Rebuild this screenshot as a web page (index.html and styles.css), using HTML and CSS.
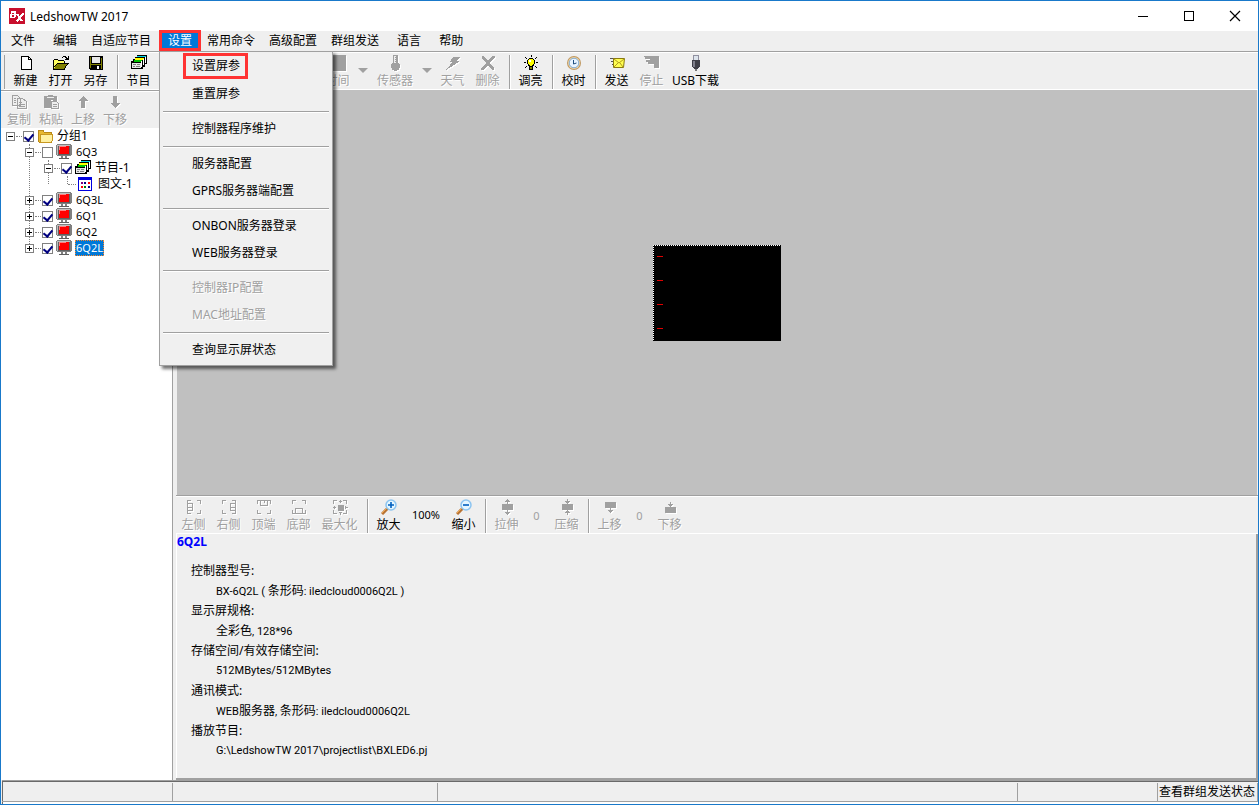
FILE: index.html
```html
<!DOCTYPE html>
<html lang="zh-CN">
<head>
<meta charset="utf-8">
<title>LedshowTW 2017</title>
<link rel="stylesheet" href="styles.css">
</head>
<body>
<svg class="defs" aria-hidden="true">
  <symbol id="i-monitor" viewBox="0 0 16 16">
    <path d="M1 0h14v1h1v10h-1v1H1v-1H0V1h1z" fill="#808080"/>
    <path d="M1 1h13v10H1z" fill="#c0c0c0"/>
    <path d="M2 2h12v9H2z" fill="#606060"/>
    <path d="M3 2h10v8H3z" fill="#ff0000"/>
    <path d="M3 2h7v1H4v3H3z" fill="#ff8080"/>
    <path d="M5 12h2v2H5zM9 12h2v2H9z" fill="#808080"/>
    <path d="M3 14h10v1H3z" fill="#606060"/>
  </symbol>
  <symbol id="i-program" viewBox="0 0 16 16">
    <path d="M6 0h10v9h-2v3h-2v2H0V6h2V4h2V2h2z" fill="#000"/>
    <path d="M6 1h9v1H6z" fill="#00d8e8"/><path d="M15 2h-1v6h1z" fill="#fff"/>
    <path d="M4 3h9v2H4z" fill="#ffff00"/><path d="M12 4h1v6h-1z" fill="#fff"/>
    <path d="M3 5h8v2H3z" fill="#00c000"/><path d="M10 6h1v6h-1z" fill="#fff"/>
    <path d="M1 8h9v5H1z" fill="#e8e8e8"/>
    <path d="M2 9h3v1H2zM6 9h3v1H6zM2 11h2v1H2zM5 11h4v1H5z" fill="#808080"/>
  </symbol>
  <symbol id="i-up" viewBox="0 0 16 16"><path d="M8 2l5 5h-3v7H6V7H3z"/></symbol>
  <symbol id="i-down" viewBox="0 0 16 16"><path d="M8 14l5-5h-3V2H6v7H3z"/></symbol>
  <symbol id="i-lens" viewBox="0 0 16 16">
    <path d="M1 15l6-6" stroke="#b87333" stroke-width="3"/>
    <path d="M1 14l5-5" stroke="#f0a850" stroke-width="1"/>
    <circle cx="10" cy="6" r="5" fill="#e4f6ff" stroke="#8cc4f0" stroke-width="1.5"/>
  </symbol>
</svg>
<div class="window">
  <header class="titlebar">
    <svg class="logo" viewBox="0 0 16 16" aria-hidden="true">
      <rect width="16" height="16" rx="1" fill="#c8102e"/>
      <path d="M2 3h4.500l1 1-.5 2 .5 1.500L6 10H1zM3.500 4.500L3.300 6h2l.3-1.500zM3 7.300L2.800 8.600h2.400l.3-1.300z" fill="#fff" fill-rule="evenodd"/>
      <path d="M8 6l5 7M14.500 5L8 13.500" stroke="#fff" stroke-width="2"/>
    </svg>
    <h1>LedshowTW 2017</h1>
    <div class="winbtns">
      <button aria-label="最小化"><svg viewBox="0 0 12 12"><path d="M1 6.500h10" stroke="#000"/></svg></button>
      <button aria-label="最大化"><svg viewBox="0 0 12 12"><path d="M1.500 1.500h9v9h-9z" stroke="#000" fill="none"/></svg></button>
      <button aria-label="关闭"><svg class="smooth" viewBox="0 0 12 12"><path d="M1 1l10 10M11 1L1 11" stroke="#000" stroke-width="1.200"/></svg></button>
    </div>
  </header>

  <nav class="menubar">
    <button>文件</button><button>编辑</button><button class="long">自适应节目</button>
    <div class="open">
      <button class="active">设置</button>
      <div class="dropdown">
        <button class="marked"><span>设置屏参</span></button>
        <button>重置屏参</button>
        <hr>
        <button>控制器程序维护</button>
        <hr>
        <button>服务器配置</button>
        <button>GPRS服务器端配置</button>
        <hr>
        <button>ONBON服务器登录</button>
        <button>WEB服务器登录</button>
        <hr>
        <button disabled>控制器IP配置</button>
        <button disabled>MAC地址配置</button>
        <hr>
        <button>查询显示屏状态</button>
      </div>
    </div>
    <button class="long">常用命令</button><button class="long">高级配置</button><button class="long">群组发送</button><button>语言</button><button>帮助</button>
  </nav>

  <div class="toolbar main">
    <button><svg viewBox="0 0 16 16"><path d="M3.500 1.500h7l3 3v10h-10z" fill="#fff" stroke="#000"/><path d="M10.500 1.500v3h3" fill="none" stroke="#000"/></svg>新建</button>
    <button><svg viewBox="0 0 16 16"><path d="M1 5h4v1h6v3H4l-3 5z" fill="#ffff60"/><path d="M1 4h4v1H1zM5 5h6v1H5zM0 5h1v9H0zM11 6h1v2h-1z" fill="#000"/><path d="M4 8h11l-4 6H1z" fill="#808000"/><path d="M4 8h12v1h-1l-3 5v1H0v-1h11l3-5H4l-3 4v-1z" fill="#000"/><path d="M9 2h1V1h3v1h1v1h1V1h1v4h-4V4h1V3h-1V2h-2v1H9z" fill="#000"/></svg>打开</button>
    <button><svg viewBox="0 0 16 16"><path d="M1 1h14v14H2l-1-1z" fill="#000"/><path d="M2 2h1v11H2zM13 3h1v11h-1z" fill="#808000"/><path d="M4 2h8v6H4z" fill="#e8e8e8"/><path d="M3 9h10v1H3z" fill="#808000"/><path d="M9 11h2v3H9z" fill="#fff"/></svg>另存</button>
    <i class="sep"></i>
    <button><svg><use href="#i-program"/></svg>节目</button>
    <div class="group">
      <button disabled><svg viewBox="0 0 16 16"><path d="M0 0h16v16H0z"/></svg>时间</button>
      <button class="caret" disabled aria-label="展开时间"></button>
      <button class="w3" disabled><svg viewBox="0 0 16 16"><path d="M6 0h5v8h1v1h1v4h-1v2h-2v1H7v-1H5v-2H4V9h1V8h1z"/><path d="M7 1h2v7H7z" fill="#eee"/><path d="M8 2h2v1H8zM8 4h2v1H8zM8 6h2v1H8z"/></svg>传感器</button>
      <button class="caret" disabled aria-label="展开传感器"></button>
      <button disabled><svg viewBox="0 0 16 16"><path d="M8 2h7l-3 4h3L6 12l-5 3 4-5H4l3-3H5z"/></svg>天气</button>
      <button disabled><svg viewBox="0 0 16 16"><path d="M2 1h2l4 5 4-5h3v1l-5 6 4 5v2h-2l-4-5-4 5H1v-1l5-6-4-5z"/></svg>删除</button>
      <i class="sep"></i>
      <button><svg viewBox="0 0 16 16"><path d="M2 2l2 2M8 0v2M14 2l-2 2M1 7.500h2M15 7.500h-2M2 13l2-2M14 13l-2-2" stroke="#000"/><path d="M6 3h4v1h1v1h1v4h-1v2h-1v4H6v-4H5V9H4V5h1V4h1z" fill="#000"/><path d="M6 4h4v1h1v4h-1v1H9v1H7v-1H6V9H5V5h1z" fill="#ffff00"/><path d="M6 5h2v2H6z" fill="#fff"/><path d="M7 12h2v2H7z" fill="#808000"/></svg>调亮</button>
      <i class="sep"></i>
      <button><svg class="smooth" viewBox="0 0 16 16"><circle cx="8" cy="8" r="7" fill="#c09860"/><circle cx="8" cy="8" r="6" fill="#f0d8a8"/><circle cx="8" cy="8" r="4.800" fill="#e8f4ff" stroke="#80a8d0"/><path d="M7.500 5v4l3-1" stroke="#205080" fill="none"/></svg>校时</button>
      <i class="sep"></i>
      <button><svg class="smooth" viewBox="0 0 16 16"><path d="M1 3.500h4M2 6.500h2M3 9.500h1" stroke="#555"/><path d="M4.500 3.500h11l-1 9h-10z" fill="#ffff50" stroke="#8a7a10"/><path d="M5 4l5 4 5-4M5 12l4-4M14 12l-3-4" fill="none" stroke="#b09a20"/></svg>发送</button>
      <button disabled><svg viewBox="0 0 16 16"><path d="M0 1h15v12h-5V9H4V7H2V5h4V4H1V2H0z"/></svg>停止</button>
      <button class="wide"><svg viewBox="0 0 16 16"><path d="M5 0h6v6H5z" fill="#9090a0"/><path d="M6 1h4v4H6z" fill="#dde4ec"/><path d="M4 5h8v7h-1v1h-1v1H6v-1H5v-1H4z" fill="#404048"/><path d="M5 6h2v6H5z" fill="#80808c"/><path d="M7 14h2v2H7z" fill="#777"/></svg>USB下载</button>
    </div>
  </div>

  <main class="body">
    <aside class="left">
      <div class="toolbar edit">
        <button disabled><svg viewBox="0 0 16 16"><path d="M1.500 1.500h5l3 3v7h-8zM6.500 4.500h5l4 3v7h-9z" fill="#eee" stroke="#a0a0a0"/><path d="M3 4h2M3 6h2M3 8h2M8 8h3M8 10h6M8 12h6" stroke="#a0a0a0"/></svg>复制</button>
        <button disabled><svg viewBox="0 0 16 16"><path d="M1 2h4V1h5v1h4v5h-3L8 6v8H1z"/><path d="M4 3h7v1H4z" fill="#eee"/><path d="M8.500 7.500h5l2 2v5h-7z" fill="#eee" stroke="#a0a0a0"/><path d="M10 10h4M10 12h4" stroke="#a0a0a0"/></svg>粘贴</button>
        <button disabled><svg><use href="#i-up"/></svg>上移</button>
        <button disabled><svg><use href="#i-down"/></svg>下移</button>
      </div>
      <ul class="tree">
        <li>
          <div class="row"><button class="exp" aria-label="折叠"></button><i class="dots"></i><label><input type="checkbox" checked><svg viewBox="0 0 16 16"><path d="M1 4l1-2h4l1 2h7v10H2L1 13z" fill="#e8b830" stroke="#b88818"/><path d="M3 6h12v7l-1 1H3z" fill="#fff0a0" stroke="#c89820"/></svg><span>分组1</span></label></div>
          <ul>
            <li>
              <div class="row"><button class="exp" aria-label="折叠"></button><i class="dots"></i><label><input type="checkbox"><svg><use href="#i-monitor"/></svg><span class="lat">6Q3</span></label></div>
              <ul>
                <li>
                  <div class="row"><button class="exp" aria-label="折叠"></button><i class="dots"></i><label><input type="checkbox" checked><svg><use href="#i-program"/></svg><span>节目-1</span></label></div>
                  <ul class="leaf">
                    <li><div class="row"><i class="dots"></i><svg viewBox="0 0 16 16"><path d="M1 1h14v14H1z" fill="#0000e0"/><path d="M2 4h12v10H2z" fill="#fff"/><path d="M4 6h2v2H4z" fill="#800080"/><path d="M7 6h2v2H7z" fill="#000080"/><path d="M11 6h2v2h-2z" fill="#ff0000"/><path d="M4 10h2v2H4z" fill="#ff0000"/><path d="M7 10h2v2H7z" fill="#008000"/><path d="M11 10h2v2h-2z" fill="#000080"/></svg><span>图文-1</span></div></li>
                  </ul>
                </li>
              </ul>
            </li>
            <li><div class="row"><button class="exp plus" aria-label="展开"></button><i class="dots"></i><label><input type="checkbox" checked><svg><use href="#i-monitor"/></svg><span class="lat">6Q3L</span></label></div></li>
            <li><div class="row"><button class="exp plus" aria-label="展开"></button><i class="dots"></i><label><input type="checkbox" checked><svg><use href="#i-monitor"/></svg><span class="lat">6Q1</span></label></div></li>
            <li><div class="row"><button class="exp plus" aria-label="展开"></button><i class="dots"></i><label><input type="checkbox" checked><svg><use href="#i-monitor"/></svg><span class="lat">6Q2</span></label></div></li>
            <li><div class="row"><button class="exp plus" aria-label="展开"></button><i class="dots"></i><label><input type="checkbox" checked><svg><use href="#i-monitor"/></svg><span class="lat sel">6Q2L</span></label></div></li>
          </ul>
        </li>
      </ul>
    </aside>

    <section class="right">
      <div class="canvas">
        <div class="screen"><i></i><i></i><i></i><i></i></div>
      </div>
      <div class="toolbar view">
        <button disabled><svg class="line" viewBox="0 0 16 16"><path d="M1.500 5V1.500H5M1.500 11v3.500H5M11 1.500h3.500V5M14.500 11v3.500H11M1.500 4.500h5v7h-5zM2 8h4"/></svg>左侧</button>
        <button disabled><svg class="line" viewBox="0 0 16 16"><path d="M1.500 5V1.500H5M1.500 11v3.500H5M11 1.500h3.500V5M14.500 11v3.500H11M9.500 4.500h5v7h-5zM10 8h4"/></svg>右侧</button>
        <button disabled><svg class="line" viewBox="0 0 16 16"><path d="M1.500 5V1.500h13V5M1.500 11v3.500H5M14.500 11v3.500H11M4.500 1.500v5h7v-5M8.500 2v2"/></svg>顶端</button>
        <button disabled><svg class="line" viewBox="0 0 16 16"><path d="M1.500 5V1.500H5M11 1.500h3.500V5M1.500 11v3.500h13V11M4.500 14v-5h7v5"/></svg>底部</button>
        <button class="w3" disabled><svg class="line" viewBox="0 0 16 16"><path d="M1.500 5V1.500H5M1.500 11v3.500H5M11 1.500h3.500V5M14.500 11v3.500H11M8.500 1v3M8.500 13v3M1 8.500h3M13 8.500h3M7 2.500h3M7 13.500h3M2.500 7v3M13.500 7v3"/><path d="M6 6h5v5H6z" fill="#a0a0a0"/></svg>最大化</button>
        <i class="sep"></i>
        <button><svg class="smooth"><use href="#i-lens"/><path d="M10 3v6M7 6h6" stroke="#0060c0" stroke-width="1.600"/></svg>放大</button>
        <output class="zoom">100%</output>
        <button><svg class="smooth"><use href="#i-lens"/><path d="M7 6h6" stroke="#0060c0" stroke-width="1.600"/></svg>缩小</button>
        <i class="sep"></i>
        <button disabled><svg viewBox="0 0 16 16"><path d="M3 5h11v6H3zM8 0h1v5H8zM7 1h3v1H7zM6 2h5v1H6zM8 11h1v5H8zM6 13h5v1H6zM7 14h3v1H7z"/></svg>拉伸</button>
        <output class="num">0</output>
        <button disabled><svg viewBox="0 0 16 16"><path d="M3 5h11v6H3zM8 0h1v5H8zM6 2h5v1H6zM7 3h3v1H7zM8 11h1v5H8zM7 12h3v1H7zM6 13h5v1H6z"/></svg>压缩</button>
        <i class="sep"></i>
        <button disabled><svg viewBox="0 0 16 16"><path d="M3 3h11v6H3zM8 9h1v5H8zM6 11h5v1H6zM7 12h3v1H7z"/></svg>上移</button>
        <output class="num">0</output>
        <button disabled><svg viewBox="0 0 16 16"><path d="M3 8h11v6H3zM8 3h1v5H8zM6 5h5v1H6zM7 6h3v1H7z"/></svg>下移</button>
      </div>
      <div class="info">
        <h2>6Q2L</h2>
        <dl>
          <dt>控制器型号:</dt><dd>BX-6Q2L ( <b>条形码</b>: iledcloud0006Q2L )</dd>
          <dt>显示屏规格:</dt><dd><b>全彩色</b>, 128*96</dd>
          <dt>存储空间/有效存储空间:</dt><dd>512MBytes/512MBytes</dd>
          <dt>通讯模式:</dt><dd>WEB<b>服务器</b>, <b>条形码</b>: iledcloud0006Q2L</dd>
          <dt>播放节目:</dt><dd>G:\LedshowTW 2017\projectlist\BXLED6.pj</dd>
        </dl>
      </div>
    </section>
  </main>

  <footer class="status"><span class="c1"></span><span class="c2"></span><span class="c3"></span><span class="c4"></span><span class="c5">查看群组发送状态</span></footer>
</div>
</body>
</html>
```
FILE: styles.css
```css
* { box-sizing: border-box; }
html, body { height: 100%; margin: 0; }
body, button, input {
  font-family: "Noto Sans", "Noto Sans CJK SC", sans-serif;
  font-size: 12px;
  color: #000;
}
button { padding: 0; border: 0; background: none; white-space: nowrap; }
ul { list-style: none; margin: 0; padding: 0; }
svg { flex: none; width: 16px; height: 16px; shape-rendering: crispEdges; }
svg.smooth { shape-rendering: auto; }
.defs { position: absolute; width: 0; height: 0; }

.window {
  display: flex;
  flex-direction: column;
  height: 100vh;
  overflow: hidden;
  border: 1px solid #1979ca;
  background: #efefef;
}

/* Title bar */
.titlebar { display: flex; flex: none; align-items: center; height: 30px; padding-left: 8px; background: #fff; }
.titlebar h1 { margin: 0 0 0 5px; font-size: 12px; font-weight: 400; }
.winbtns { display: flex; margin-left: auto; }
.winbtns button { display: flex; align-items: center; justify-content: center; width: 46px; height: 30px; }
.winbtns svg { width: 12px; height: 12px; }

/* Menu bar */
.menubar { display: flex; height: 21px; padding-bottom: 1px; border-bottom: 1px solid #a0a0a0; flex: none; }
.menubar > button, .open > button { padding: 0 8px 0 10px; line-height: 20px; }
.menubar > .long { padding-left: 6px; }
.open { position: relative; }
.open > .active {
  height: 21px;
  margin-top: -1px;
  padding: 0 6px;
  border: 3px solid #ff3333;
  line-height: 15px;
  background: #0078d7;
  color: #fff;
}
.dropdown {
  position: absolute;
  z-index: 5;
  top: 20px;
  left: 0;
  width: 174px;
  padding: 1px 3px 2px;
  border: 1px solid #a0a0a0;
  background: #f0f0f0;
  box-shadow: 3px 3px 3px rgba(0, 0, 0, 0.55);
}
.dropdown button { display: block; width: 100%; height: 27px; padding-left: 29px; text-align: left; line-height: 27px; }
.dropdown button:disabled, .toolbar button:disabled { color: #a0a0a0; text-shadow: 1px 1px #fff; }
.dropdown .marked { padding-left: 20px; }
.marked span { display: inline-block; padding: 0 5px 0 6px; border: 3px solid #ff3333; line-height: 20px; vertical-align: top; }
.dropdown hr { height: 2px; margin: 4px 0 2px; border: 0; border-top: 1px solid #a0a0a0; background: #fff; }

/* Toolbars */
.toolbar { display: flex; flex: none; }
.toolbar button {
  display: flex;
  flex-direction: column;
  align-items: center;
  width: 35px;
  height: 35px;
  line-height: 19px;
}
.toolbar button:disabled svg { fill: #a0a0a0; filter: drop-shadow(1px 1px 0 #fff); }
.toolbar svg.line { fill: none; stroke: #a0a0a0; }
.toolbar button:disabled svg.line { fill: none; }
.toolbar .w3 { width: 48px; }
.toolbar .wide { width: 53px; }
.toolbar .caret { width: 16px; }
.caret::before { content: ""; margin-top: 13px; border: 5px solid transparent; border-top-color: #a0a0a0; border-bottom: 0; }
.sep { flex: none; width: 2px; height: 34px; margin: 0 2px 0 4px; background: linear-gradient(90deg, #a0a0a0 50%, #fff 50%); }
.main {
  height: 38px;
  margin-left: 3px;
  padding: 2px 0 0 4px;
  border: solid #fff;
  border-width: 1px 0;
  background: linear-gradient(#a0a0a0, #a0a0a0) 0 2px / 1px 34px no-repeat;
}
.group { display: flex; margin-left: 164px; }
.edit { height: 38px; padding: 3px 0 0 2px; border-top: 1px solid #a0a0a0; background: #efefef; box-shadow: inset 0 1px #fff; }
.edit button { width: 32px; }
.view { height: 39px; padding-top: 3px; border: solid; border-width: 1px 0; border-color: #a0a0a0 #fff #fff; box-shadow: inset 0 1px #fff; }
.view .w3 { width: 47px; }
.zoom { width: 40px; font-size: 11px; line-height: 32px; text-align: center; }
.num { width: 25px; font-size: 11px; line-height: 34px; text-align: center; color: #a0a0a0; }

/* Work area */
.body { display: flex; flex: 1; min-height: 0; }
.left { flex: none; width: 172px; border-right: 1px solid #a0a0a0; background: #fff; }
.right { display: flex; flex-direction: column; flex: 1; min-width: 0; margin-left: 3px; }

/* Tree */
.tree { padding-left: 5px; }
.tree ul { position: relative; padding-left: 19px; }
.tree ul::before { content: ""; position: absolute; top: 0; bottom: 8px; left: 23px; border-left: 1px dotted #808080; }
.tree .leaf { padding-left: 23px; }
.row { position: relative; display: flex; align-items: center; height: 16px; }
.row label { display: flex; align-items: center; }
.exp {
  flex: none;
  width: 9px;
  height: 9px;
  border: 1px solid #808080;
  background: linear-gradient(#000, #000) 1px 3px / 5px 1px no-repeat #fff;
}
.exp.plus { background: linear-gradient(#000, #000) 1px 3px / 5px 1px no-repeat, linear-gradient(#000, #000) 3px 1px / 1px 5px no-repeat #fff; }
.dots { flex: none; width: 6px; margin: 0 1px; border-top: 1px dotted #808080; }
.leaf .dots { width: 8px; }
.row input {
  flex: none;
  appearance: none;
  width: 11px;
  height: 11px;
  margin: 0;
  border: 1px solid #808080;
  background: #fff;
}
.row input:checked::before {
  content: "";
  display: block;
  width: 4px;
  height: 7px;
  margin: 0 0 0 2px;
  border: solid #000080;
  border-width: 0 2px 2px 0;
  transform: rotate(40deg);
}
.row svg { margin: 0 3px; }
.leaf .row svg { margin: 0 4px 0 0; }
.row span { padding: 0 1px; line-height: 16px; }
.row .lat { font-size: 11px; }
.row .sel { background: #0078d7; color: #fff; outline: 1px dotted #ff8728; outline-offset: -1px; }

/* Canvas */
.canvas { display: flex; flex: 1; align-items: center; justify-content: center; margin: 0 1px; background: #c0c0c0; }
.screen {
  display: flex;
  flex-direction: column;
  justify-content: space-between;
  width: 128px;
  height: 96px;
  padding: 11px 0 12px 4px;
  background:
    repeating-linear-gradient(90deg, #fff 0 1px, #000 1px 2px) 0 0 / 100% 1px no-repeat,
    repeating-linear-gradient(#fff 0 1px, #000 1px 2px) 0 0 / 1px 100% no-repeat,
    #000;
}
.screen i { width: 6px; height: 1px; background: #e00000; }

/* Details */
.info { flex: none; height: 246px; border: solid #a0a0a0; border-width: 0 2px 2px 0; box-shadow: inset 1px 0 #fff; }
.info h2 { margin: 0; padding-left: 1px; font-size: 12px; line-height: 15px; color: #0000ff; }
.info dl { margin: 12px 0 0 15px; line-height: 20px; }
.info dt { height: 20px; }
.info dd { height: 20px; margin-left: 25px; font-family: Roboto, "Noto Sans CJK SC", sans-serif; font-size: 11px; }
.info b { font-size: 12px; font-weight: 400; }

/* Status bar */
.status { display: flex; flex: none; height: 24px; margin-left: 1px; padding-bottom: 2px; border: solid #a0a0a0; border-width: 1px 0 0; box-shadow: inset 0 1px #696969, inset 1px 0 #696969, inset 0 -2px #fff; }
.status span { flex: none; margin-top: 2px; border: solid #a0a0a0; border-width: 0 1px 1px 0; line-height: 18px; white-space: nowrap; }
.status .c1 { width: 171px; }
.status .c2 { width: 265px; }
.status .c3 { flex: 1; }
.status .c4 { width: 140px; }
.status .c5 { width: 100px; padding-left: 1px; }
```
